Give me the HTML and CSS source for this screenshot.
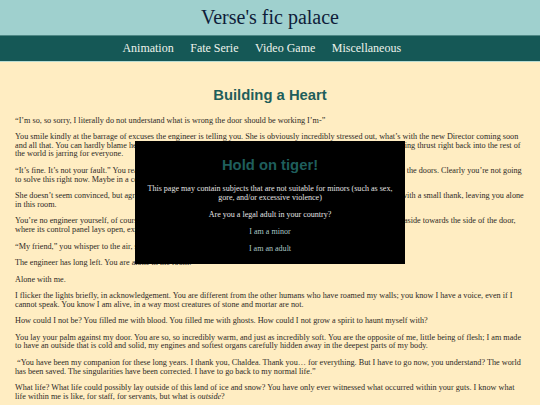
FILE: index.html
```html
<!DOCTYPE html>
<html lang="en">
<head>
<meta charset="utf-8">
<title>Building a Heart - Verse's fic palace</title>
<link rel="stylesheet" href="styles.css">
</head>
<body>
<header class="site-header">
  <div class="site-title">Verse's fic palace</div>
</header>
<nav class="site-nav">
  <a href="#" class="nav-link">Animation</a>
  <a href="#" class="nav-link">Fate Serie</a>
  <a href="#" class="nav-link">Video Game</a>
  <a href="#" class="nav-link">Miscellaneous</a>
</nav>
<main class="story">
  <h1 class="story-title">Building a Heart</h1>
  <p>“I’m so, so sorry, I literally do not understand what is wrong the door should be working I’m-”</p>
  <p>You smile kindly at the barrage of excuses the engineer is telling you. She is obviously incredibly stressed out, what’s with the new Director coming soon and all that. You can hardly blame her, honestly. Everyone here has been on edge for weeks, and after so long alone, being thrust right back into the rest of the world is jarring for everyone.</p>
  <p>“It’s fine. It’s not your fault.” You reassure her kindly, your gaze drifting away from her worried face and back towards the doors. Clearly you’re not going to solve this right now. Maybe in a couple of hours, once the others are back.</p>
  <p>She doesn’t seem convinced, but agrees to go look for someone more qualified anyway, and hurries off down the hall with a small thank, leaving you alone in this room.</p>
  <p>You’re no engineer yourself, of course, but you still find yourself curious enough to take a couple of small, quiet steps aside towards the side of the door, where its control panel lays open, exposed and humming.</p>
  <p>“My friend,” you whisper to the air, softly, almost fondly.</p>
  <p>The engineer has long left. You are alone in the room.</p>
  <p>Alone with me.</p>
  <p>I flicker the lights briefly, in acknowledgement. You are different from the other humans who have roamed my walls; you know I have a voice, even if I cannot speak. You know I am alive, in a way most creatures of stone and mortar are not.</p>
  <p>How could I not be? You filled me with blood. You filled me with ghosts. How could I not grow a spirit to haunt myself with?</p>
  <p>You lay your palm against my door. You are so, so incredibly warm, and just as incredibly soft. You are the opposite of me, little being of flesh; I am made to have an outside that is cold and solid, my engines and softest organs carefully hidden away in the deepest parts of my body.</p>
  <p>&nbsp;“You have been my companion for these long years. I thank you, Chaldea. Thank you… for everything. But I have to go now, you understand? The world has been saved. The singularities have been corrected. I have to go back to my normal life.”</p>
  <p>What life? What life could possibly lay outside of this land of ice and snow? You have only ever witnessed what occurred within your guts. I know what life within me is like, for staff, for servants, but what is <em>outside</em>?</p>
</main>
<div class="age-gate">
  <div class="age-box">
    <h2 class="age-title">Hold on tiger!</h2>
    <p>This page may contain subjects that are not suitable for minors (such as sex, gore, and/or excessive violence)</p>
    <p>Are you a legal adult in your country?</p>
    <p><a href="#" class="age-choice">I am a minor</a></p>
    <p><a href="#" class="age-choice">I am an adult</a></p>
  </div>
</div>
</body>
</html>
```
FILE: styles.css
```css
html, body {
  margin: 0;
  padding: 0;
}

body {
  background: #ffedc2;
  color: #2e2a26;
  font-family: "Liberation Serif", "Times New Roman", serif;
  font-size: 8.2px;
  line-height: 8.7px;
  overflow: hidden;
}

.site-header {
  background: #9fd0ce;
  height: 35px;
  text-align: center;
}

.site-title {
  font-size: 20px;
  line-height: 35px;
  color: #0f1d3a;
}

.site-nav {
  background: #155856;
  border-top: 1px solid #4e8886;
  border-bottom: 1px solid #b9dcd2;
  height: 25px;
  display: flex;
  justify-content: center;
  align-items: center;
}

.nav-link {
  color: #eef3ec;
  text-decoration: none;
  font-size: 12px;
  margin-right: 16.5px;
}

.story {
  padding: 0 15px;
}

.story-title {
  font-family: "Liberation Sans", Arial, sans-serif;
  font-weight: bold;
  font-size: 14.8px;
  line-height: 17px;
  color: #1e5e5b;
  text-align: center;
  margin: 25px 0 12.5px;
}

.story p {
  margin: 7.8px 0;
}

.age-gate {
  position: fixed;
  inset: 0;
  display: flex;
  align-items: center;
  justify-content: center;
}

.age-box {
  width: 260px;
  background: #000;
  color: #e2e2e2;
  font-size: 8.05px;
  line-height: 9px;
  text-align: center;
  padding: 8px 5px 3px;
}

.age-title {
  font-family: "Liberation Sans", Arial, sans-serif;
  font-weight: bold;
  font-size: 14.8px;
  line-height: 17px;
  color: #1f5e5c;
  margin: 8px 0 10px;
}

.age-box p {
  margin: 8px 0;
}

.age-choice {
  color: #a9c6c4;
  text-decoration: none;
}
```
